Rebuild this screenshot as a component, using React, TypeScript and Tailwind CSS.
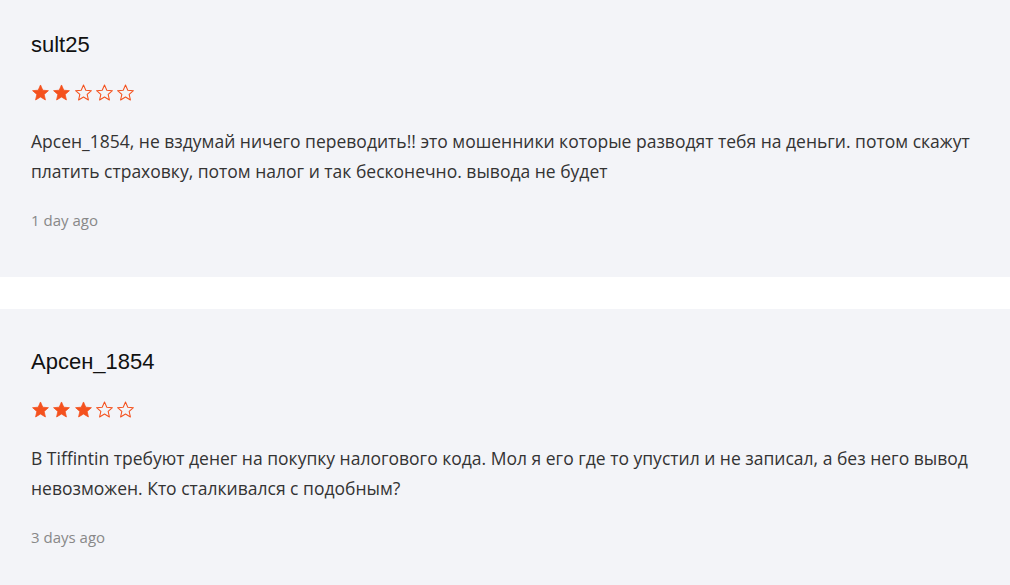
const reviews = [
  {
    name: 'sult25',
    rating: 2,
    text: 'Арсен_1854, не вздумай ничего переводить!! это мошенники которые разводят тебя на деньги. потом скажут платить страховку, потом налог и так бесконечно. вывода не будет',
    date: '1 day ago',
  },
  {
    name: 'Арсен_1854',
    rating: 3,
    text: 'В Tiffintin требуют денег на покупку налогового кода. Мол я его где то упустил и не записал, а без него вывод невозможен. Кто сталкивался с подобным?',
    date: '3 days ago',
  },
];

const Star = ({ filled }: { filled: boolean }) => (
  <svg width="19" height="19" viewBox="0 0 24 24" className="shrink-0">
    <path
      d="M12 2.5l2.9 6.6 7.1.6-5.4 4.7 1.6 7-6.2-3.7-6.2 3.7 1.6-7L2 9.7l7.1-.6z"
      fill={filled ? '#f4511e' : 'none'}
      stroke="#f4511e"
      strokeWidth={filled ? 1 : 1.3}
      strokeLinejoin="round"
    />
  </svg>
);

const Review = ({ name, rating, text, date }: (typeof reviews)[number]) => (
  <div className="bg-[#f3f4f8] px-[31px] pt-[39px] pb-[47px]">
    <h3 className="text-[22px] leading-[28px] text-[#111] font-['Liberation_Sans',Arial,sans-serif]">{name}</h3>
    <div className="flex gap-[2.3px] mt-[24px]">
      {[1, 2, 3, 4, 5].map((i) => (
        <Star key={i} filled={i <= rating} />
      ))}
    </div>
    <p className="mt-[24px] text-[17.5px] leading-[30px] text-[#333]">{text}</p>
    <div className="mt-[24px] text-[15px] leading-[20px] text-[#888]">{date}</div>
  </div>
);

export default function App() {
  return (
    <div className="w-[1010px] h-[585px] overflow-hidden bg-white font-['Open_Sans',sans-serif]">
      <div className="-mt-[8px] flex flex-col gap-[32px]">
        {reviews.map((r) => (
          <Review key={r.name} {...r} />
        ))}
      </div>
    </div>
  );
}
